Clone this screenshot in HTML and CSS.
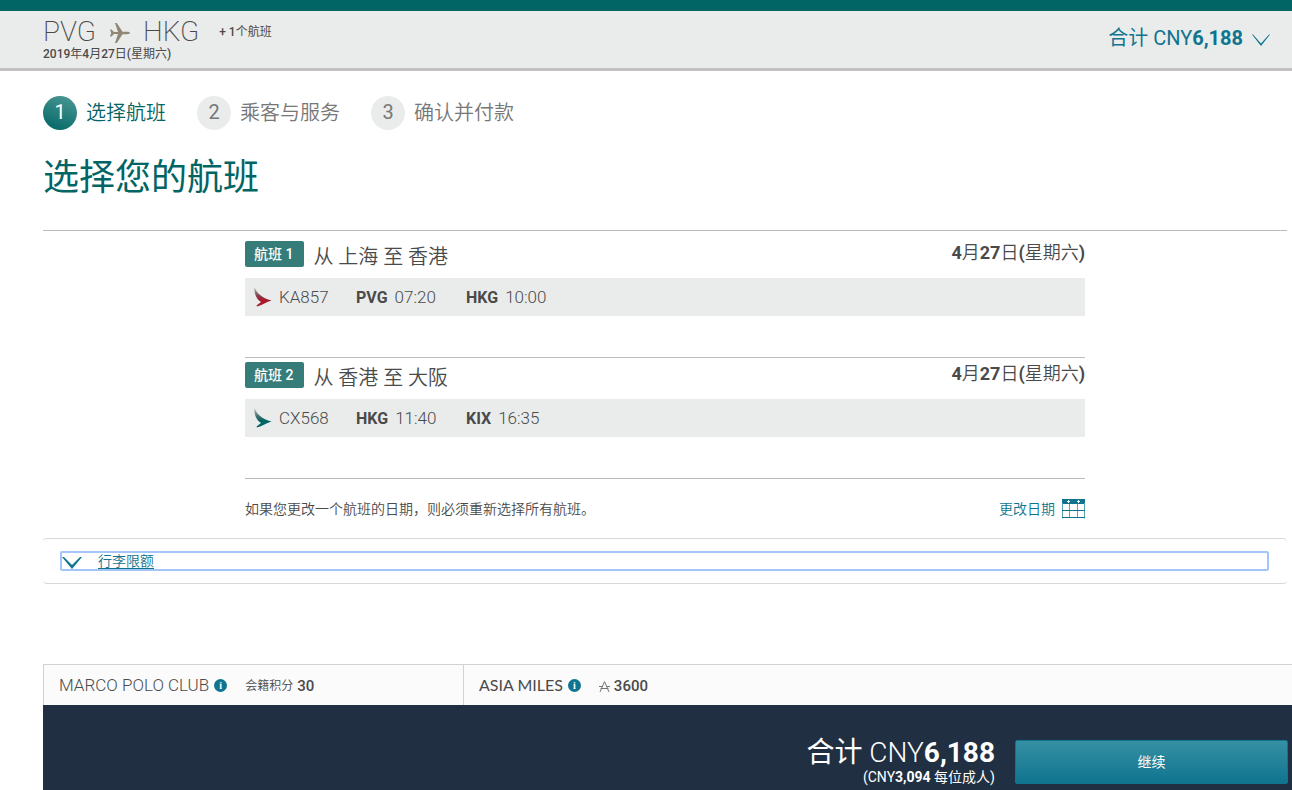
FILE: index.html
```html
<!DOCTYPE html>
<html lang="zh-CN">
<head>
<meta charset="utf-8">
<meta name="viewport" content="width=device-width, initial-scale=1">
<title>选择您的航班</title>
<link rel="stylesheet" href="styles.css">
</head>
<body>
<header class="trip-bar">
  <div class="trip">
    <div class="route">
      <span class="airport">PVG</span>
      <svg class="plane" viewBox="0 0 20 20" aria-hidden="true"><path d="M0 6.500h1.500L4 9h4L5 0h1.800L12.500 8.800H17c1.600 0 3 .5 3 1.200s-1.400 1.200-3 1.200h-4.500L6.800 20H5l3-9H4l-2.500 2.500H0L1.200 10z"/></svg>
      <span class="airport">HKG</span>
      <span class="more"><b>+ 1</b>个航班</span>
    </div>
    <div class="trip-date"><b>2019</b>年<b>4</b>月<b>27</b>日<b>(</b>星期六<b>)</b></div>
  </div>
  <button class="total-toggle" type="button">
    <span class="total-label"><span class="total-currency">合计 CNY</span><b>6,188</b></span>
    <svg class="toggle-arrow" viewBox="0 0 18 12" aria-hidden="true"><path d="M0 .5h1L9 9.500l8-9h1L9 12z"/></svg>
  </button>
</header>

<main class="page">
  <ol class="steps">
    <li class="step step-current"><span class="step-number">1</span><span>选择航班</span></li>
    <li class="step"><span class="step-number">2</span><span>乘客与服务</span></li>
    <li class="step"><span class="step-number">3</span><span>确认并付款</span></li>
  </ol>
  <h1 class="title">选择您的航班</h1>

  <div class="flights">
    <div class="legs">
      <section class="leg">
        <div class="leg-head">
          <span class="badge">航班 1</span>
          <h2 class="leg-title">从 上海 至 香港</h2>
          <span class="leg-date"><b>4</b>月<b>27</b>日<b>(</b>星期六<b>)</b></span>
        </div>
        <div class="leg-row">
          <svg class="tail" viewBox="0 0 18 20" aria-hidden="true">
            <defs><linearGradient id="tail-red" x1="0" y1="0" x2="0" y2="1"><stop offset="0" stop-color="#bdbcb8"/><stop offset=".45" stop-color="#7d4550"/><stop offset=".65" stop-color="#ab192d"/></linearGradient></defs>
            <path fill="url(#tail-red)" d="M.5 0C2.500 6 8 11 17.500 13.500 13 15 8 18 3 19.500L2.500 18.500 7 15C2.500 12 0 7 .5 0z"/>
          </svg>
          <span class="flight-no">KA857</span>
          <span class="stop"><b>PVG</b><span>07:20</span></span>
          <span class="stop"><b>HKG</b><span>10:00</span></span>
        </div>
      </section>
      <section class="leg">
        <div class="leg-head">
          <span class="badge">航班 2</span>
          <h2 class="leg-title">从 香港 至 大阪</h2>
          <span class="leg-date"><b>4</b>月<b>27</b>日<b>(</b>星期六<b>)</b></span>
        </div>
        <div class="leg-row">
          <svg class="tail" viewBox="0 0 18 20" aria-hidden="true">
            <defs><linearGradient id="tail-green" x1="0" y1="0" x2="0" y2="1"><stop offset="0" stop-color="#bdbcb8"/><stop offset=".45" stop-color="#3d6e6d"/><stop offset=".65" stop-color="#006564"/></linearGradient></defs>
            <path fill="url(#tail-green)" d="M.5 0C2.500 6 8 11 17.500 13.500 13 15 8 18 3 19.500L2.500 18.500 7 15C2.500 12 0 7 .5 0z"/>
          </svg>
          <span class="flight-no">CX568</span>
          <span class="stop"><b>HKG</b><span>11:40</span></span>
          <span class="stop"><b>KIX</b><span>16:35</span></span>
        </div>
      </section>
      <div class="change">
        <p class="change-note">如果您更改一个航班的日期，则必须重新选择所有航班。</p>
        <a class="change-link" href="#dates">更改日期
          <svg class="calendar" viewBox="0 0 23 20" aria-hidden="true"><path fill="#0f748f" d="M0 0h23v5H0z"/><path fill="none" stroke="#5c9fb4" d="M.5 4v15.500M22.500 4v15.500M7.500 5v14M15.500 5v14"/><path fill="none" stroke="#0f748f" d="M0 11.500h23M0 18.500h23"/><path fill="#fff" d="M6 1h1v1h1v1H7v1H6V3H5V2h1zM16 1h1v1h1v1h-1v1h-1V3h-1V2h1z"/></svg>
        </a>
      </div>
    </div>
  </div>

  <div class="baggage">
    <button class="baggage-toggle" type="button">
      <svg class="baggage-arrow" viewBox="0 0 20 12" aria-hidden="true"><path d="M0 0h2l8 8 8-8h2L10 12z"/></svg>
      <span class="baggage-label">行李限额</span>
    </button>
  </div>
</main>

<footer class="summary">
  <div class="rewards">
    <div class="reward reward-club">
      <span class="reward-name">MARCO POLO CLUB</span>
      <button class="info" type="button" aria-label="Marco Polo Club">i</button>
      <span class="reward-value">会籍积分 <b>30</b></span>
    </div>
    <div class="reward">
      <span class="reward-name reward-name-miles">ASIA MILES</span>
      <button class="info" type="button" aria-label="Asia Miles">i</button>
      <span class="reward-value">
        <svg class="miles" viewBox="0 0 11 11" aria-hidden="true"><path d="M1 11L5.500.5 10 11M0 5.500h3.500M7.500 5.500H11M1.500 7.500h8"/></svg>
        <b>3600</b>
      </span>
    </div>
  </div>
  <div class="checkout">
    <div class="amount">
      <div class="amount-total"><span class="amount-label">合计</span> CNY<b>6,188</b></div>
      <div class="amount-each">(CNY<b>3,094</b> 每位成人)</div>
    </div>
    <button class="continue" type="button">继续</button>
  </div>
</footer>
</body>
</html>
```
FILE: styles.css
```css
* { box-sizing: border-box; }

body {
  margin: 0;
  min-height: 100vh;
  display: flex;
  flex-direction: column;
  background: #fff;
  color: #4a4a4a;
  font: 350 14px/20px Roboto, "Noto Sans CJK SC", sans-serif;
}

button {
  margin: 0;
  padding: 0;
  border: 0;
  background: none;
  font: inherit;
  cursor: pointer;
}

b { font-weight: 700; }

.trip-bar {
  display: flex;
  justify-content: space-between;
  align-items: flex-start;
  padding: 6px 22px 6px 43px;
  border-top: 11px solid #006564;
  border-bottom: 3px solid #c3c0c1;
  background: #eaeceb;
}

.route {
  display: flex;
  align-items: center;
  height: 30px;
}

.airport {
  font-size: 28px;
  font-weight: 200;
  line-height: 30px;
}

.plane {
  width: 20px;
  height: 20px;
  margin: 2px 13px 0 14px;
  fill: #8f8773;
}

.more {
  margin-left: 20px;
  font-size: 12px;
  font-weight: 400;
}

.more b { font-weight: 500; }

.trip-date {
  font-size: 12px;
  font-weight: 400;
  line-height: 15px;
}

.trip-date b { font-weight: 500; }

.total-toggle {
  display: flex;
  align-items: center;
  gap: 9px;
  padding-top: 6px;
  color: #0f748f;
}

.total-label {
  font-size: 20px;
  line-height: 30px;
}

.total-currency { font-weight: 400; }

.toggle-arrow {
  width: 18px;
  height: 12px;
  margin-top: 3px;
  fill: #0f748f;
}

.page {
  flex: 1;
  padding: 25px 5px 80px 43px;
}

.steps {
  display: flex;
  gap: 31px;
  margin: 0;
  padding: 0;
  list-style: none;
}

.step {
  display: flex;
  align-items: center;
  gap: 9px;
  height: 34px;
  color: #777;
  font-size: 20px;
  line-height: 34px;
}

.step-number {
  width: 34px;
  height: 34px;
  border-radius: 50%;
  background: #eaecec;
  font-weight: 400;
  line-height: 33px;
  text-align: center;
}

.step-current { color: #006564; }

.step-current .step-number {
  background: linear-gradient(200deg, #4d9a96, #006564);
  color: #fff;
}

.title {
  margin: 24px 0 28px;
  color: #006564;
  font-size: 36px;
  font-weight: 400;
  line-height: 48px;
}

.flights { border-top: 1px solid #bbb; }

.legs {
  width: 68%;
  max-width: 840px;
  min-width: 640px;
  margin: 0 auto;
}

.leg {
  padding: 4px 0 41px;
  border-bottom: 1px solid #bbb;
}

.leg:first-child { padding-top: 10px; }

.leg-head {
  display: flex;
  align-items: flex-start;
  height: 37px;
}

.badge {
  padding: 0 11px 0 9px;
  border-radius: 2px;
  background: #367d79;
  color: #fff;
  font-weight: 500;
  line-height: 26px;
}

.leg-title {
  margin: 0 0 0 9px;
  font-size: 20px;
  font-weight: 350;
  line-height: 32px;
}

.leg-date {
  margin-left: auto;
  font-size: 18px;
  line-height: 24px;
}

.leg-row {
  display: flex;
  align-items: center;
  height: 38px;
  padding-left: 9px;
  background: #eaecec;
  font-size: 17px;
  line-height: 24px;
}

.tail {
  width: 18px;
  height: 20px;
  margin-right: 7px;
}

.flight-no { width: 77px; }

.stop {
  display: flex;
  align-items: baseline;
  gap: 7px;
  width: 110px;
}

.stop b { font-size: 16px; }

.change {
  display: flex;
  justify-content: space-between;
  align-items: center;
  height: 59px;
}

.change-note { margin: 0; }

.change-link {
  display: flex;
  align-items: center;
  gap: 7px;
  color: #0f748f;
  text-decoration: none;
}

.calendar {
  width: 23px;
  height: 20px;
}

.baggage {
  padding: 12px 18px 12px 17px;
  border: solid #d8d8d8;
  border-width: 1px 0;
  border-radius: 4px;
}

.baggage-toggle {
  display: flex;
  align-items: center;
  gap: 16px;
  width: 100%;
  border: 2px solid #a3c5fa;
  border-radius: 2px;
  color: #0f748f;
  line-height: 16px;
}

.baggage-arrow {
  width: 20px;
  height: 12px;
  margin-top: 3px;
  fill: #0f748f;
}

.baggage-label {
  text-decoration: underline;
  text-underline-offset: 2px;
}

.summary { margin-left: 43px; }

.rewards {
  display: flex;
  border: solid #d2d2d2;
  border-width: 1px 0 0 1px;
  background: #fbfbfb;
}

.reward {
  display: flex;
  align-items: center;
  height: 40px;
  padding-left: 15px;
}

.reward-club {
  width: 34%;
  max-width: 420px;
  border-right: 1px solid #d2d2d2;
}

.reward-name {
  font-size: 17px;
  white-space: nowrap;
}

.reward-name-miles {
  font-family: Lato, sans-serif;
  font-size: 16px;
  font-weight: 400;
}

.info {
  width: 13px;
  height: 13px;
  margin: 1px 18px 0 5px;
  border-radius: 50%;
  background: #0f748f;
  color: #fff;
  font: 700 10px/13px "Liberation Serif", serif;
  text-align: center;
}

.reward-value {
  display: flex;
  align-items: center;
  gap: 4px;
  padding-top: 2px;
  font-size: 12px;
  white-space: nowrap;
}

.reward-value b {
  font-size: 15px;
  font-weight: 500;
}

.miles {
  width: 11px;
  height: 11px;
  fill: none;
  stroke: #777;
  stroke-width: 1;
}

.checkout {
  display: flex;
  justify-content: flex-end;
  align-items: flex-end;
  gap: 20px;
  height: 85px;
  padding: 0 4px 6px 20px;
  background: #212f42;
  color: #fff;
}

.amount { text-align: right; }

.amount-total {
  font-size: 28px;
  line-height: 34px;
}

.amount-label { font-weight: 400; }

.amount-each {
  font-size: 14px;
  font-weight: 400;
  line-height: 14px;
}

.continue {
  width: 273px;
  height: 44px;
  border: 1px solid #0f748f;
  border-radius: 2px;
  background: linear-gradient(#3690a3, #0f748f);
  color: #fff;
  font-weight: 400;
}
```
